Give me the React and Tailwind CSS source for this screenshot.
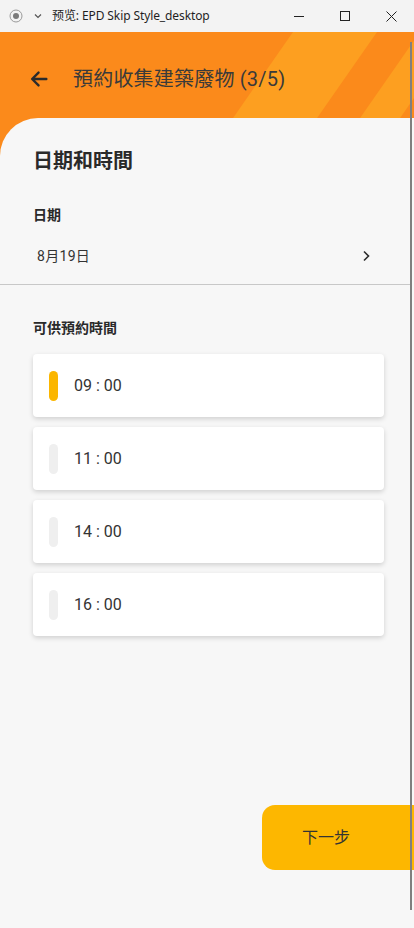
import { useState } from "react";

const slots = ["09 : 00", "11 : 00", "14 : 00", "16 : 00"];

function TitleBar() {
  return (
    <div className="h-[32px] bg-[#f3f3f3] flex items-center text-[12px] text-[#1f1f1f] font-['Noto_Sans','Noto_Sans_CJK_SC',sans-serif]">
      <svg width="14" height="14" viewBox="0 0 14 14" className="ml-[9px]">
        <circle cx="7" cy="7" r="6" fill="none" stroke="#9a9a9a" strokeWidth="1" />
        <circle cx="7" cy="7" r="3" fill="#7a7a7a" />
      </svg>
      <svg width="10" height="10" viewBox="0 0 10 10" className="ml-[10px]">
        <path d="M2 3.5 L5 6.5 L8 3.5" fill="none" stroke="#555" strokeWidth="1.2" />
      </svg>
      <span className="ml-[9px] tracking-[-0.1px]">预览: EPD Skip Style_desktop</span>
      <div className="ml-auto flex items-center">
        <div className="w-[46px] h-[32px] flex items-center justify-center">
          <div className="w-[10px] h-[1px] bg-[#222]" />
        </div>
        <div className="w-[46px] h-[32px] flex items-center justify-center">
          <div className="w-[10px] h-[10px] border border-[#222]" />
        </div>
        <div className="w-[46px] h-[32px] flex items-center justify-center">
          <svg width="11" height="11" viewBox="0 0 11 11">
            <path d="M0.5 0.5 L10.5 10.5 M10.5 0.5 L0.5 10.5" stroke="#222" strokeWidth="1" />
          </svg>
        </div>
      </div>
    </div>
  );
}

export default function App() {
  const [selected, setSelected] = useState(0);

  return (
    <div className="relative w-[414px] h-[928px] overflow-hidden bg-[#f7f7f7] font-['Roboto','Noto_Sans_CJK_TC',sans-serif]">
      <TitleBar />

      {/* orange header with stripes */}
      <div className="relative h-[124px] bg-[#fb8a1b] overflow-hidden">
        <svg className="absolute inset-0" width="414" height="124" viewBox="0 0 414 124">
          <polygon points="293,0 377,0 315,89 231,89" fill="#fd9f20" />
          <polygon points="420,0 460,0 398,89 358,89" fill="#fd9f20" />
        </svg>
        <div className="relative flex items-center h-[94px] pl-[28px]">
          <svg width="22" height="22" viewBox="0 0 24 24">
            <path d="M20 12H5 M11.5 5 L4.5 12 L11.5 19" fill="none" stroke="#2b2b2b" strokeWidth="2.6" strokeLinecap="round" strokeLinejoin="round" />
          </svg>
          <span className="ml-[23px] text-[20px] text-[#3a3a3a] tracking-[0.2px]">預約收集建築廢物 (3/5)</span>
        </div>
      </div>

      {/* content panel */}
      <div className="relative -mt-[38px] bg-[#f7f7f7] rounded-tl-[38px] h-[780px]">
        <div className="px-[33px] pt-[29px]">
          <h1 className="text-[20px] font-semibold text-[#2a2a2a] leading-[28px]">日期和時間</h1>
          <div className="mt-[30px] text-[14px] font-semibold text-[#2a2a2a] leading-[20px]">日期</div>
          <div className="mt-[21px] flex items-center justify-between pl-[4px] pr-[9px] h-[20px]">
            <span className="text-[14px] text-[#333] tracking-[0.3px]">8月19日</span>
            <svg width="12" height="12" viewBox="0 0 12 12">
              <path d="M4 1.5 L8.5 6 L4 10.5" fill="none" stroke="#2b2b2b" strokeWidth="1.6" />
            </svg>
          </div>
        </div>
        <div className="mt-[18px] h-[1px] bg-[#c8c8c8] w-[410px]" />

        <div className="px-[33px] pt-[33px]">
          <div className="text-[14px] font-semibold text-[#2a2a2a] leading-[20px]">可供預約時間</div>
          <div className="mt-[16px] w-[351px] flex flex-col gap-[10px]">
            {slots.map((t, i) => (
              <button
                key={t}
                onClick={() => setSelected(i)}
                className="h-[63px] bg-white rounded-[4px] shadow-[0_2px_5px_rgba(0,0,0,0.16)] flex items-center pl-[16px] text-left"
              >
                <div className={`w-[9px] h-[30px] rounded-full ${i === selected ? "bg-[#fbb600]" : "bg-[#efefef]"}`} />
                <span className="ml-[16px] text-[16px] text-[#333]">{t}</span>
              </button>
            ))}
          </div>
        </div>

        <div className="absolute right-0 top-[687px] w-[152px] h-[65px] bg-[#fdb700] rounded-l-[13px] flex items-center pl-[40px]">
          <span className="text-[16px] text-[#333]">下一步</span>
        </div>
      </div>

      {/* scrollbar line */}
      <div className="absolute left-[410px] top-[42px] w-[2px] h-[868px] bg-[#7f7f7f]" />
    </div>
  );
}
